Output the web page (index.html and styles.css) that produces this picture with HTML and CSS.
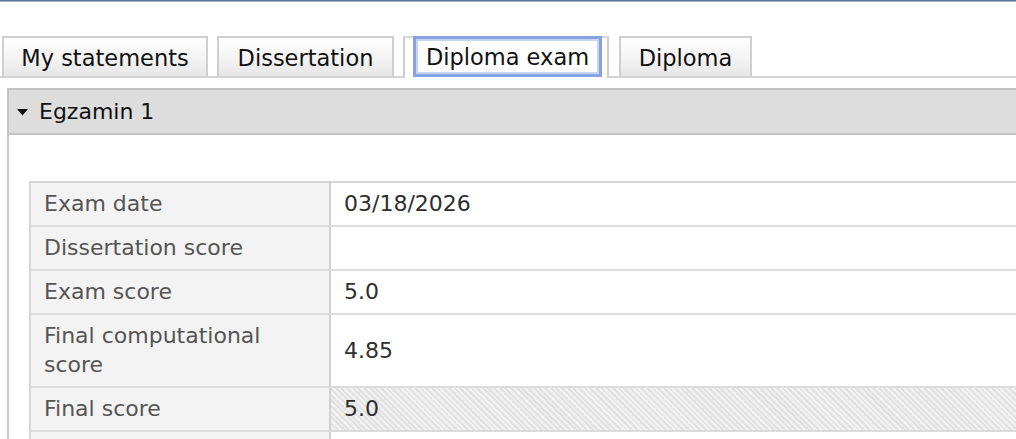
FILE: index.html
```html
<!DOCTYPE html>
<html>
<head>
<meta charset="utf-8">
<title>Diploma exam</title>
<link rel="stylesheet" href="styles.css">
</head>
<body>
<div class="topbar"></div>
<div class="tabbar">
  <div class="tab tab-statements">My statements</div>
  <div class="tab tab-dissertation">Dissertation</div>
  <div class="tab tab-active"><span class="focus">Diploma exam</span></div>
  <div class="tab tab-diploma">Diploma</div>
</div>
<div class="panel">
  <div class="panel-header">
    <svg class="caret" width="11" height="7" viewBox="0 0 11 7"><polygon points="0,0 11,0 5.5,6.5" fill="#111"/></svg>
    <span class="panel-title">Egzamin 1</span>
  </div>
  <div class="panel-body">
    <table class="details">
      <tr><td class="label">Exam date</td><td class="value">03/18/2026</td></tr>
      <tr><td class="label">Dissertation score</td><td class="value"></td></tr>
      <tr><td class="label">Exam score</td><td class="value">5.0</td></tr>
      <tr><td class="label">Final computational<br>score</td><td class="value">4.85</td></tr>
      <tr><td class="label">Final score</td><td class="value hatched">5.0</td></tr>
      <tr><td class="label">&nbsp;</td><td class="value"></td></tr>
    </table>
  </div>
</div>
</body>
</html>
```
FILE: styles.css
```css
html, body {
  margin: 0;
  padding: 0;
  background: #fff;
  overflow: hidden;
  font-family: "DejaVu Sans", Verdana, sans-serif;
  font-size: 22px;
}

.topbar {
  height: 1px;
  border-top: 1px solid #5d7594;
  background: #aab6c6;
}

.tabbar {
  display: flex;
  align-items: flex-end;
  gap: 9px;
  padding: 34px 0 0 2px;
  height: 40px;
  border-bottom: 2px solid #d3d3d3;
}

.tab {
  box-sizing: border-box;
  height: 40px;
  border: 2px solid #cfcfcf;
  border-bottom: none;
  background: linear-gradient(#ffffff, #f3f3f3 55%, #e6e6e6);
  color: #111;
  display: flex;
  align-items: center;
  justify-content: center;
  line-height: 1;
  padding-top: 2px;
  font-size: 22.5px;
}

.tab-statements { width: 206px; }
.tab-dissertation { width: 177px; }
.tab-diploma { width: 133px; margin-left: 1px; }

.tab-active {
  width: 206px;
  height: 42px;
  margin-bottom: -2px;
  background: #fff;
  justify-content: flex-start;
  align-items: stretch;
  padding: 0 0 0 8px;
  border-top-color: #d6d6d6;
}

.focus {
  box-sizing: border-box;
  width: 189px;
  height: 41px;
  margin-top: -2px;
  border: 3px solid #87a2e2;
  box-shadow: inset 0 0 0 2px #c7d5f3;
  background: #fff;
  display: flex;
  align-items: center;
  justify-content: center;
  padding-top: 1px;
}

.panel {
  margin: 10px 0 0 7px;
}

.panel-header {
  box-sizing: border-box;
  height: 47px;
  background: #dddddd;
  border: 2px solid #c3c3c3;
  border-right: none;
  display: flex;
  align-items: center;
  padding-left: 8px;
  color: #111;
}

.caret {
  margin-right: 11px;
  margin-top: 2px;
}

.panel-title {
  line-height: 1;
  padding-top: 1px;
}

.panel-body {
  border-left: 2px solid #c8c8c8;
  padding: 46px 0 0 20px;
  height: 258px;
  overflow: hidden;
}

.details {
  border-collapse: collapse;
  width: calc(100% + 4px);
  border-top: 2px solid #d6d6d6;
  border-left: 2px solid #d6d6d6;
}

.details td {
  border-bottom: 2px solid #dcdcdc;
  padding: 6px 13px 7px 13px;
  line-height: 29px;
  vertical-align: middle;
}

.label {
  box-sizing: border-box;
  width: 300px;
  background: #f3f3f3;
  color: #555;
  border-right: 2px solid #d0d0d0;
}

.value {
  background: #fff;
  color: #2e2e2e;
}

.hatched {
  background: repeating-linear-gradient(45deg, #e2e2e2 0 2px, #f1f1f1 2px 4px);
}
```
